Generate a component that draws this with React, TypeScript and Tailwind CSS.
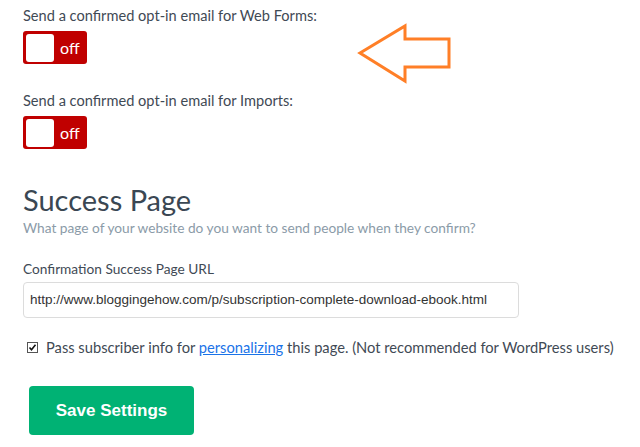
import React from 'react';

function OffToggle() {
  return (
    <div className="mt-[7px] flex h-[33px] w-[64px] items-center rounded-[3px] bg-[#c00000] pl-[3px]">
      <div className="h-[28px] w-[28px] rounded-[3px] bg-white" />
      <span className="ml-[6px] text-[16px] leading-none text-white">off</span>
    </div>
  );
}

function LeftArrow() {
  return (
    <svg width="100" height="64" viewBox="0 0 100 64" className="absolute left-[355px] top-[22px]">
      <polygon
        points="5,31 50,4 50,17 94,17 94,45 50,45 50,59"
        fill="none"
        stroke="#ff7f27"
        strokeWidth="3"
        strokeLinejoin="miter"
      />
    </svg>
  );
}

export default function App() {
  return (
    <div
      className="relative h-[447px] w-[640px] overflow-hidden bg-white pl-[23px] pt-[8px] text-[#3f4a55]"
      style={{ fontFamily: 'Lato, "Open Sans", sans-serif' }}
    >
      <LeftArrow />

      <p className="text-[14.6px] leading-[16px]">Send a confirmed opt-in email for Web Forms:</p>
      <OffToggle />

      <p className="mt-[29px] text-[14.6px] leading-[16px]">Send a confirmed opt-in email for Imports:</p>
      <OffToggle />

      <h2 className="mt-[34px] text-[29px] leading-[34px] text-[#3a4753]">Success Page</h2>
      <p className="mt-[3px] text-[13.7px] leading-[16px] text-[#8b9ba8]">
        What page of your website do you want to send people when they confirm?
      </p>

      <label className="mt-[25px] block text-[13.7px] leading-[16px] text-[#3f4a55]">Confirmation Success Page URL</label>
      <div
        className="mt-[5px] flex h-[36px] w-[496px] items-center rounded-[4px] border border-[#dcdcdc] px-[6px] text-[13.5px] text-[#333]"
        style={{ fontFamily: '"Liberation Sans", Arial, sans-serif' }}
      >
        http://www.bloggingehow.com/p/subscription-complete-download-ebook.html
      </div>

      <div className="mt-[21px] flex items-center pl-[4px]">
        <span className="flex h-[11px] w-[11px] items-center justify-center border border-[#555] bg-white">
          <svg width="9" height="9" viewBox="0 0 9 9">
            <path d="M1.5 4.5 L3.5 6.8 L7.5 1.8" fill="none" stroke="#111" strokeWidth="1.6" />
          </svg>
        </span>
        <span className="ml-[8px] text-[14.7px] leading-[16px]">
          Pass subscriber info for{' '}
          <span className="text-[#1a73e8] underline">personalizing</span> this page. (Not recommended for WordPress users)
        </span>
      </div>

      <button
        className="ml-[6px] mt-[31px] flex h-[49px] w-[165px] items-center justify-center rounded-[4px] bg-[#00b274] text-[17px] font-bold text-white"
        style={{ fontFamily: '"Liberation Sans", Arial, sans-serif' }}
      >
        Save Settings
      </button>
    </div>
  );
}
